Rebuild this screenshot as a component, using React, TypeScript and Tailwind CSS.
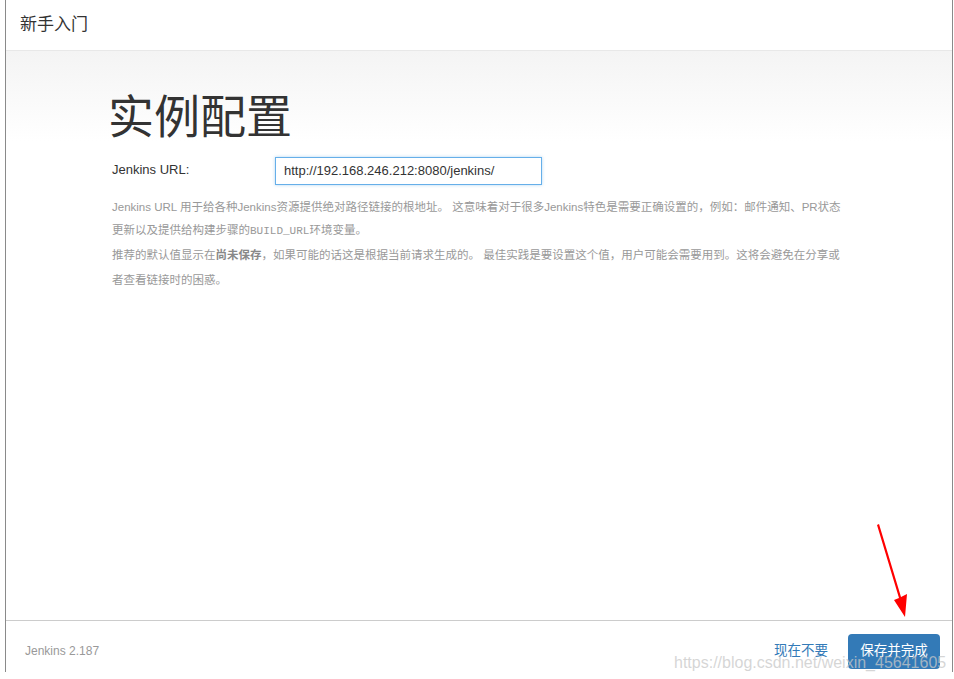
import React from "react";

const font = { fontFamily: '"Liberation Sans", "Noto Sans CJK SC", sans-serif' };

export default function App() {
  return (
    <div className="relative w-[954px] h-[679px] bg-white overflow-hidden" style={font}>
      <div className="ml-[5px] w-[948px] h-[672px] border-l border-r border-l-[#8a8a8a] border-r-[#8a8a8a] flex flex-col">
        <div className="h-[51px] shrink-0 border-b border-[#e8e8e8] flex items-center pl-[14px] text-[17px] text-[#333]">
          新手入门
        </div>
        <div className="flex-1 bg-gradient-to-b from-[#f4f4f4] to-white to-[90px] pl-[104px]">
          <h1 className="mt-[38px] -ml-[2px] text-[46px] leading-[57px] text-[#333]">实例配置</h1>
          <div className="mt-[11px] flex items-start">
            <label className="w-[165px] pl-[2px] pt-[3px] text-[13px] text-[#333]">Jenkins URL:</label>
            <div className="w-[267px] h-[28px] border border-[#66afe9] bg-white flex items-center pl-[8px] text-[13px] text-[#333] shadow-[0_0_3px_rgba(102,175,233,0.5)]">
              http://192.168.246.212:8080/jenkins/
            </div>
          </div>
          <div className="mt-[11px] pl-[2px] text-[11.5px] text-[#999] leading-[23px]">
            <p>
              Jenkins URL 用于给各种Jenkins资源提供绝对路径链接的根地址。 这意味着对于很多Jenkins特色是需要正确设置的，例如：邮件通知、PR状态
              <br />
              更新以及提供给构建步骤的<span style={{ fontFamily: '"Liberation Mono", monospace' }} className="text-[11px]">BUILD_URL</span>环境变量。
            </p>
            <p className="leading-[25px]">
              推荐的默认值显示在<b className="font-bold text-[#888]">尚未保存</b>，如果可能的话这是根据当前请求生成的。 最佳实践是要设置这个值，用户可能会需要用到。这将会避免在分享或
              <br />
              者查看链接时的困惑。
            </p>
          </div>
        </div>
        <div className="h-[52px] shrink-0 border-t border-[#cccccc] flex items-center pl-[19px] pr-[12px]">
          <span className="text-[12px] text-[#999] mt-[8px]">Jenkins 2.187</span>
          <div className="ml-auto flex items-center">
            <span className="text-[13.5px] text-[#337ab7] mr-[20px] mt-[10px]">现在不要</span>
            <div className="h-[35px] w-[92px] rounded-[4px] bg-[#337ab7] text-white text-[13.5px] flex items-center justify-center mt-[10px]">
              保存并完成
            </div>
          </div>
        </div>
      </div>
      <div className="absolute left-[674px] top-[651px] text-[16px] text-[rgba(200,200,200,0.75)] whitespace-nowrap pointer-events-none">
        https://blog.csdn.net/weixin_45641605
      </div>
      <svg className="absolute left-0 top-0 pointer-events-none" width="954" height="679">
        <polygon points="877,525 879,524 901,597 907,594 905,617 894,600 899,598" fill="#ff0000" />
      </svg>
    </div>
  );
}
